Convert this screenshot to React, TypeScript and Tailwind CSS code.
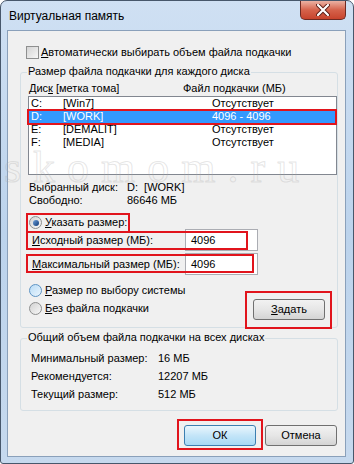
const RED = "border-2 border-[#e1141c]";

const DISKS = [
  { letter: "C:", label: "[Win7]", size: "Отсутствует", selected: false },
  { letter: "D:", label: "[WORK]", size: "4096 - 4096", selected: true },
  { letter: "E:", label: "[DEMALIT]", size: "Отсутствует", selected: false },
  { letter: "F:", label: "[MEDIA]", size: "Отсутствует", selected: false },
];

const TOTALS = [
  { label: "Минимальный размер:", value: "16 МБ" },
  { label: "Рекомендуется:", value: "12207 МБ" },
  { label: "Текущий размер:", value: "512 МБ" },
];

function Radio({ checked, tone }: { checked?: boolean; tone?: "blue" }) {
  const face =
    tone === "blue"
      ? "border-[#5e94c4] bg-gradient-to-br from-[#b9dcf6] to-[#eaf5fd]"
      : "border-[#8e8f8f] bg-gradient-to-br from-[#d2d2d2] to-[#f8f8f8]";
  return (
    <div className={`flex h-[13px] w-[13px] shrink-0 items-center justify-center rounded-full border ${face}`}>
      {checked && <div className="h-[6px] w-[6px] rounded-full bg-gradient-to-br from-[#6d9fd8] to-[#0f3a78]" />}
    </div>
  );
}

function Button({ label, primary, children }: { label: React.ReactNode; primary?: boolean; children?: React.ReactNode }) {
  const face = primary
    ? "border-[#3c7fb1] bg-gradient-to-b from-[#eaf6fd] via-[#c4e5f8] to-[#a7d9f5]"
    : "border-[#707070] bg-gradient-to-b from-[#f2f2f2] via-[#e6e6e6] to-[#d4d4d4]";
  return (
    <div className={`relative flex h-[21px] w-[72px] items-center justify-center rounded-[3px] border ${face}`}>
      {label}
      {children}
    </div>
  );
}

export default function App() {
  return (
    <div className="relative h-[464px] w-[354px] overflow-hidden whitespace-nowrap bg-white font-['Liberation_Sans',sans-serif] text-[11px] leading-[13px] text-black">
      <div className="flex h-full w-full flex-col rounded-t-[7px] rounded-b-[3px] border border-[#47576b] bg-gradient-to-b from-[#cfe0f3] via-[#bcd3ec] to-[#c6d9ee]">
        {/* title bar */}
        <div className="flex h-[29px] items-start justify-between">
          <span className="mt-[9px] pl-[8px] text-[12px]">Виртуальная память</span>
          <div className="mr-[7px] flex h-[19px] w-[46px] items-center justify-center rounded-b-[5px] border border-t-0 border-[#6e2a22] bg-gradient-to-b from-[#eab1a3] via-[#d5624b] to-[#c8432c]">
            <svg width="14" height="12" viewBox="0 0 14 12">
              <path d="M2 1 L12 11 M12 1 L2 11" stroke="#5a1d16" strokeWidth="4" strokeLinecap="round" />
              <path d="M2 1 L12 11 M12 1 L2 11" stroke="#ffffff" strokeWidth="2.2" strokeLinecap="round" />
            </svg>
          </div>
        </div>

        {/* client area */}
        <div className="ml-[6px] flex h-[427px] w-[339px] flex-col border border-[#8aa0ba] bg-[#f0f0f0]">
          <div className="ml-[18px] mt-[15px] flex h-[13px] items-center gap-[2px]">
            <div className="h-[13px] w-[13px] shrink-0 border border-[#8e8f8f] bg-gradient-to-br from-[#d4d4d4] to-[#f7f7f7]" />
            <span>
              <u>А</u>втоматически выбирать объем файла подкачки
            </span>
          </div>

          {/* per-disk group */}
          <div className="relative ml-[12px] mt-[13px] h-[256px] w-[318px] rounded-[3px] border border-[#d5dfe5]">
            <span className="absolute -top-[8px] left-[6px] bg-[#f0f0f0] px-[1px]">Размер файла подкачки для каждого диска</span>

            <div className="mt-[9px] flex h-[13px]">
              <span className="ml-[8px] w-[154px]">
                Дис<u>к</u> [метка тома]
              </span>
              <span>Файл подкачки (МБ)</span>
            </div>

            <div className="relative ml-[7px] mt-[1px] h-[79px] w-[309px] border border-[#828790] bg-white">
              {DISKS.map((d) => (
                <div key={d.letter} className={`flex h-[13px] ${d.selected ? "bg-[#3399ff] text-white" : ""}`}>
                  <span className="w-[34px] pl-[2px]">{d.letter}</span>
                  <span className="w-[149px]">{d.label}</span>
                  <span>{d.size}</span>
                </div>
              ))}
              <div className={`absolute -left-[2px] top-[12px] h-[16px] w-[310px] ${RED}`} />
            </div>

            <div className="ml-[8px] mt-[6px] flex flex-col">
              <div className="flex h-[13px]">
                <span className="w-[98px]">Выбранный диск:</span>
                <span>D:&nbsp;&nbsp;[WORK]</span>
              </div>
              <div className="flex h-[13px]">
                <span className="w-[98px]">Свободно:</span>
                <span>86646 МБ</span>
              </div>
            </div>

            <div className="relative ml-[8px] mt-[9px] flex h-[13px] items-center gap-[3px]">
              <Radio checked />
              <span>
                <u>У</u>казать размер:
              </span>
              <div className={`absolute -left-[3px] -top-[3px] h-[20px] w-[104px] ${RED}`} />
            </div>

            <div className="relative flex h-[22px] items-center">
              <span className="ml-[11px] w-[153px]">
                <u>И</u>сходный размер (МБ):
              </span>
              <div className="flex h-[22px] w-[73px] items-center border border-[#abadb3] bg-white pl-[5px]">4096</div>
              <div className={`absolute left-[5px] top-[2px] h-[19px] w-[222px] ${RED}`} />
            </div>

            <div className="relative mt-[2px] flex h-[22px] items-center">
              <span className="ml-[11px] w-[153px]">
                <u>М</u>аксимальный размер (МБ):
              </span>
              <div className="flex h-[22px] w-[73px] items-center border border-[#abadb3] bg-white pl-[5px]">4096</div>
              <div className={`absolute left-[5px] top-[1px] h-[19px] w-[228px] ${RED}`} />
            </div>

            <div className="mt-[9px] flex">
              <div className="ml-[8px] flex flex-col gap-[5px]">
                <div className="flex h-[13px] items-center gap-[3px]">
                  <Radio tone="blue" />
                  <span>
                    <u>Р</u>азмер по выбору системы
                  </span>
                </div>
                <div className="flex h-[13px] items-center gap-[3px]">
                  <Radio />
                  <span>
                    <u>Б</u>ез файла подкачки
                  </span>
                </div>
              </div>
              <div className="ml-auto mr-[12px] mt-[15px]">
                <Button
                  label={
                    <span>
                      <u>З</u>адать
                    </span>
                  }
                >
                  <div className={`absolute -left-[9px] -top-[9px] h-[38px] w-[87px] ${RED}`} />
                </Button>
              </div>
            </div>
          </div>

          {/* totals group */}
          <div className="relative ml-[12px] mt-[10px] h-[73px] w-[318px] rounded-[3px] border border-[#d5dfe5]">
            <span className="absolute -top-[8px] left-[6px] bg-[#f0f0f0] px-[1px]">Общий объем файла подкачки на всех дисках</span>
            <div className="ml-[10px] mt-[13px] flex flex-col gap-[5px]">
              {TOTALS.map((t) => (
                <div key={t.label} className="flex h-[13px]">
                  <span className="w-[127px]">{t.label}</span>
                  <span>{t.value}</span>
                </div>
              ))}
            </div>
          </div>

          <div className="mt-[14px] flex justify-end gap-[9px] pr-[8px]">
            <Button label="ОК" primary>
              <div className={`absolute -left-[8px] -top-[7px] h-[31px] w-[86px] ${RED}`} />
            </Button>
            <Button label="Отмена" />
          </div>
        </div>
      </div>

      {/* watermark */}
      <div className="pointer-events-none absolute left-[4px] top-[146px] font-['Liberation_Serif',serif] text-[44px] leading-[44px] tracking-[12px] text-transparent [-webkit-text-stroke:1px_rgba(170,170,170,0.3)]">
        skomom.ru
      </div>
    </div>
  );
}
